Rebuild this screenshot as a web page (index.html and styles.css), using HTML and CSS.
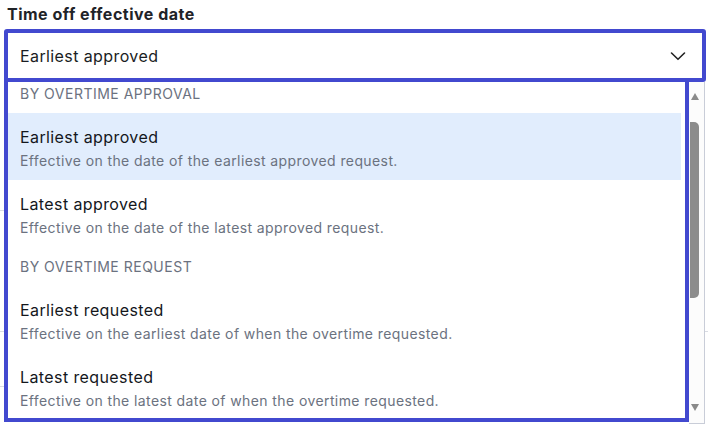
FILE: index.html
```html
<!DOCTYPE html>
<html>
<head>
<meta charset="utf-8">
<link rel="stylesheet" href="styles.css">
</head>
<body>
<div class="page">
  <div class="bg-lines">
    <div class="bg-line l1"></div>
    <div class="bg-line l2"></div>
    <div class="bg-line l3"></div>
  </div>
  <label class="field-label">Time off effective date</label>
  <div class="select">
    <span class="select-value">Earliest approved</span>
    <svg class="chevron" width="16" height="10" viewBox="0 0 16 10"><path d="M1.5 2 L8 8.3 L14.5 2" fill="none" stroke="#222" stroke-width="1.6" stroke-linecap="round" stroke-linejoin="round"/></svg>
  </div>
  <div class="dropdown">
    <div class="listbox">
      <div class="list">
        <div class="group-header">By overtime approval</div>
        <div class="option selected">
          <div class="opt-title">Earliest approved</div>
          <div class="opt-desc">Effective on the date of the earliest approved request.</div>
        </div>
        <div class="option">
          <div class="opt-title">Latest approved</div>
          <div class="opt-desc">Effective on the date of the latest approved request.</div>
        </div>
        <div class="group-header">By overtime request</div>
        <div class="option">
          <div class="opt-title">Earliest requested</div>
          <div class="opt-desc">Effective on the earliest date of when the overtime requested.</div>
        </div>
        <div class="option">
          <div class="opt-title">Latest requested</div>
          <div class="opt-desc">Effective on the latest date of when the overtime requested.</div>
        </div>
      </div>
    </div>
    <div class="scrollbar">
      <div class="arrow up"></div>
      <div class="track"><div class="thumb"></div></div>
      <div class="arrow down"></div>
    </div>
  </div>
</div>
</body>
</html>
```

FILE: styles.css
```css
html, body {
  margin: 0;
  padding: 0;
  background: #ffffff;
}
body {
  font-family: "Inter", "Noto Sans", sans-serif;
  color: #111827;
  width: 708px;
  height: 426px;
  overflow: hidden;
}
.page {
  position: relative;
  padding-top: 4px;
}
.bg-lines {
  position: absolute;
  left: 0;
  top: 0;
  width: 708px;
  height: 426px;
}
.bg-line {
  position: absolute;
  left: 0;
  width: 708px;
  height: 1px;
  background: #d9dce3;
}
.l1 { top: 210px; width: 6px; }
.l2 { top: 331px; }
.l3 { top: 386px; width: 6px; }
.field-label {
  position: relative;
  display: block;
  margin-left: 7px;
  font-size: 16px;
  line-height: 20px;
  font-weight: 650;
  color: #1f2328;
  letter-spacing: 0.5px;
}
.select {
  position: relative;
  margin: 5px 2px 0 4px;
  height: 45px;
  border: 4px solid #4249cf;
  border-radius: 3px;
  background: #fff;
  display: flex;
  align-items: center;
  justify-content: space-between;
  padding: 0 16px 0 12px;
}
.select-value {
  font-size: 16px;
  color: #1a1d23;
  line-height: 24px;
  letter-spacing: 0.4px;
}
.chevron {
  display: block;
  margin-top: 1px;
}
.dropdown {
  position: relative;
  margin: -4px 0 0 4px;
  display: flex;
  width: 701px;
  height: 346px;
}
.listbox {
  width: 677px;
  height: 336px;
  border: 4px solid #4249cf;
  background: #fff;
  overflow: hidden;
}
.list {
  margin-top: -8px;
  padding-right: 4px;
}
.group-header {
  padding: 10px 12px 9px;
  font-size: 14px;
  line-height: 20px;
  text-transform: uppercase;
  color: #6b7280;
  letter-spacing: 0.5px;
}
.option {
  padding: 12px 12px 9px;
}
.option.selected {
  background: #e1edfd;
}
.opt-title {
  font-size: 16px;
  line-height: 24px;
  color: #14171c;
  letter-spacing: 0.4px;
}
.opt-desc {
  margin-top: 2px;
  font-size: 14px;
  line-height: 20px;
  color: #6b7280;
  letter-spacing: 0.4px;
}
.scrollbar {
  width: 15px;
  height: 341px;
  margin-top: 4px;
  background: #fcfcfc;
  border-right: 1px solid #c9cdd8;
  border-bottom: 1px solid #c9cdd8;
  display: flex;
  flex-direction: column;
  align-items: flex-start;
}
.arrow {
  width: 0;
  height: 0;
  margin-left: 2px;
  border-left: 4.5px solid transparent;
  border-right: 4.5px solid transparent;
}
.arrow.up {
  margin-top: 11px;
  border-bottom: 7px solid #8a8a8a;
}
.arrow.down {
  margin-bottom: 12px;
  border-top: 7px solid #8a8a8a;
}
.track {
  flex: 1;
  width: 15px;
  padding-top: 22px;
}
.thumb {
  margin-left: 1px;
  width: 9px;
  height: 176px;
  background: #8c8c8c;
  border-radius: 0 5px 5px 0;
}
```
